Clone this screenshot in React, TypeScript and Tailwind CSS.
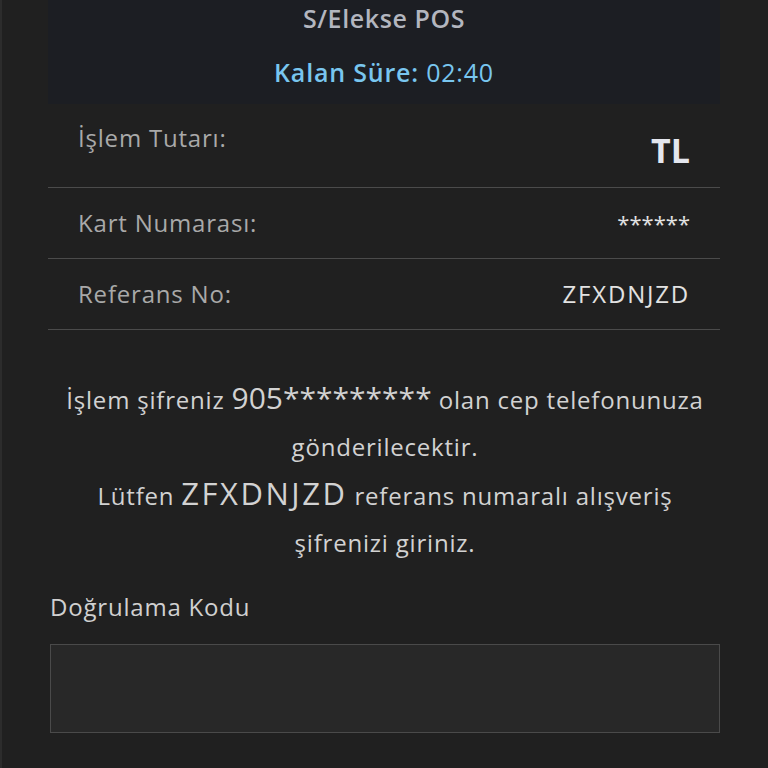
const rows = [
  { label: "İşlem Tutarı:", value: "TL", first: true },
  { label: "Kart Numarası:", value: "******", first: false },
  { label: "Referans No:", value: "ZFXDNJZD", first: false },
];

export default function App() {
  return (
    <div
      className="min-h-[768px] w-full bg-[#202020] border-l-2 border-[#2c2c2c] text-[#d4d4d4]"
      style={{ fontFamily: "'Open Sans', 'Noto Sans', sans-serif" }}
    >
      <div className="ml-[46px] mr-[48px]">
        <div className="bg-[#1c1e23] h-[104px] flex flex-col items-center pt-[2px]">
          <h1 className="text-[25px] font-semibold text-[#b3b6bf] leading-[32px] tracking-[0.6px]">
            S/Elekse POS
          </h1>
          <div className="mt-[22px] text-[25px] font-semibold text-[#79c6ef] leading-[32px] tracking-[0.8px]">
            Kalan Süre: <span className="font-medium">02:40</span>
          </div>
        </div>

        {rows.map((r) =>
          r.first ? (
            <div
              key={r.label}
              className="flex justify-between h-[84px] px-[30px] pt-[18px] border-b border-[#4b4b4b]"
            >
              <span className="text-[24px] leading-[32px] tracking-[0.8px] text-[#a9a9a9]">{r.label}</span>
              <span className="text-[34px] leading-[40px] font-bold text-[#e4e6ee] mt-[8px]">
                {r.value}
              </span>
            </div>
          ) : (
            <div
              key={r.label}
              className="flex items-center justify-between h-[71px] px-[30px] border-b border-[#4b4b4b]"
            >
              <span className="text-[24px] tracking-[0.8px] text-[#a9a9a9]">{r.label}</span>
              <span
                className={
                  r.value === "******"
                    ? "text-[22px] text-[#e2e2e2]"
                    : "text-[24px] tracking-[1.8px] text-[#e2e2e2]"
                }
              >
                {r.value}
              </span>
            </div>
          )
        )}
      </div>

      <div className="mt-[44px] px-[48px] text-center text-[24px] leading-[47px] tracking-[0.8px] text-[#d2d2d2]">
        <p>
          İşlem şifreniz <span className="text-[30px] tracking-normal">905*********</span> olan cep
          telefonunuza gönderilecektir.
        </p>
        <p>
          Lütfen <span className="text-[31px] tracking-[2.5px]">ZFXDNJZD</span> referans numaralı
          alışveriş şifrenizi giriniz.
        </p>
      </div>

      <div className="ml-[46px] mr-[48px] mt-[26px]">
        <label className="block pl-[2px] text-[24px] leading-[30px] tracking-[0.8px] text-[#d0d0d0]">
          Doğrulama Kodu
        </label>
        <input
          className="mt-[22px] block w-[670px] h-[89px] ml-[2px] bg-[#282828] border border-[#4a4a4a] outline-none"
          type="text"
        />
      </div>
    </div>
  );
}
